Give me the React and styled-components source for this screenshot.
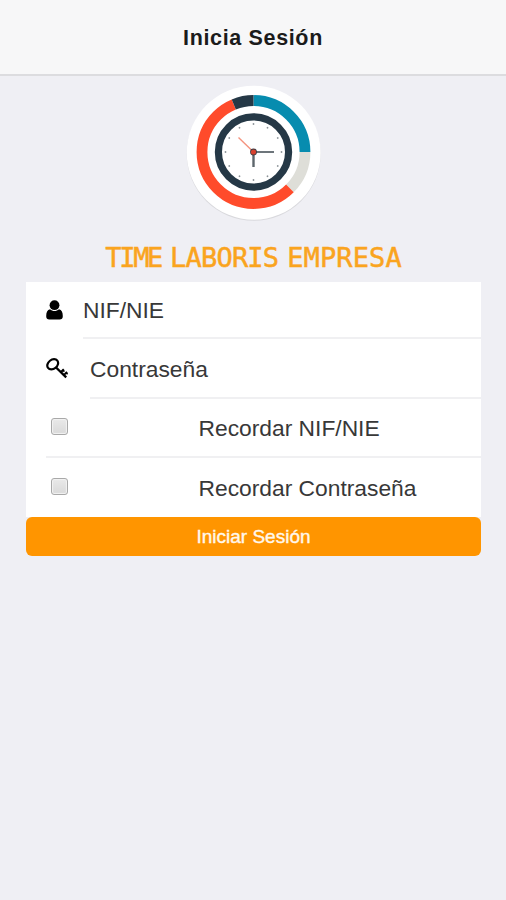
import { useState } from "react";
import styled, { createGlobalStyle } from "styled-components";

const GlobalStyle = createGlobalStyle`
  * {
    box-sizing: border-box;
  }

  body {
    margin: 0;
    background: #efeff4;
    font-family: "Liberation Sans", Arial, sans-serif;
  }
`;

const Page = styled.div`
  min-height: 100vh;
  display: flex;
  flex-direction: column;
`;

const Header = styled.header`
  height: 76px;
  display: flex;
  justify-content: center;
  align-items: center;
  padding-top: 2px;
  background: #f7f7f8;
  border-bottom: 2px solid #dcdcdf;
`;

const HeaderTitle = styled.h1`
  margin: 0;
  color: #1b1b1b;
  font-size: 21.5px;
  font-weight: 700;
  letter-spacing: 0.65px;
`;

const Content = styled.main`
  display: flex;
  flex-direction: column;
  padding: 8px 25px 0 26px;
`;

const Logo = styled.svg`
  width: 140px;
  height: 140px;
  align-self: center;
`;

const Brand = styled.h2`
  height: 34px;
  margin: 17px 0 7px;
  display: flex;
  justify-content: center;
  gap: 9px;
  color: #faa41e;
  font-family: "DejaVu Sans Mono", "Liberation Mono", monospace;
  font-size: 27px;
  font-weight: 400;
  line-height: 34px;
  -webkit-text-stroke: 0.5px #faa41e;
`;

const BrandWord = styled.span`
  letter-spacing: ${(props) => props.$spacing}px;
`;

const Form = styled.form`
  display: flex;
  flex-direction: column;
`;

const List = styled.div`
  padding-left: 20px;
  background: #fff;
`;

const Row = styled.label`
  height: ${(props) => props.$height}px;
  display: flex;
`;

const IconCell = styled.span`
  width: ${(props) => props.$width}px;
  flex-shrink: 0;
  display: flex;
  align-items: center;
  padding-bottom: 1px;
`;

const FieldInput = styled.input`
  flex: 1;
  min-width: 0;
  padding: 2px 0 0;
  border: 0;
  border-bottom: 2px solid #f0f0f2;
  border-radius: 0;
  outline: 0;
  background: transparent;
  color: #383838;
  font-family: inherit;
  font-size: 22.8px;

  &::placeholder {
    color: #383838;
    opacity: 1;
  }
`;

const CheckRow = styled(Row)`
  align-items: center;
  padding-left: 5px;
  border-bottom: ${(props) => (props.$last ? "0" : "2px solid #f0f0f2")};
`;

const Checkbox = styled.input`
  appearance: none;
  width: 17px;
  height: 17px;
  margin: 0 130.5px 2px 0;
  border: 1px solid #a9a9a9;
  border-radius: 3px;
  background: linear-gradient(#e9e9e9, #d9d9d9);
  box-shadow: inset 0 0 1px 1px #f2f2f2;

  &:checked {
    background: #ff9500;
  }
`;

const CheckLabel = styled.span`
  padding-top: 2px;
  color: #383838;
  font-size: 22.8px;
`;

const SubmitButton = styled.button`
  height: 39px;
  padding: 1px 0 0;
  border: 0;
  border-radius: 6px;
  background: #ff9500;
  color: #fff8ec;
  font-family: inherit;
  font-size: 19px;
  -webkit-text-stroke: 0.4px #fff8ec;
`;

// start and length in degrees, clockwise from twelve o'clock
const arcs = [
  { color: "#078caf", start: 0, length: 90 },
  { color: "#deded8", start: 90, length: 45 },
  { color: "#ff4b2b", start: 135, length: 202.5 },
  { color: "#253846", start: 337.5, length: 22.5 },
];

const ClockLogo = () => (
  <Logo viewBox="0 0 140 140">
    <circle cx="69.7" cy="69.8" r="67" fill="#d9d9dd" />
    <circle cx="69.7" cy="68.7" r="67" fill="#fff" />
    {arcs.map((arc) => (
      <circle
        key={arc.color}
        cx="69.5"
        cy="68"
        r="51.5"
        fill="none"
        stroke={arc.color}
        strokeWidth="10.8"
        pathLength="360"
        strokeDasharray={`${arc.length} ${360 - arc.length}`}
        transform={`rotate(${arc.start - 90} 69.5 68)`}
      />
    ))}
    <circle cx="69.5" cy="68" r="35.1" fill="#fff" stroke="#253846" strokeWidth="7.2" />
    {Array.from({ length: 12 }, (_, idx) => (
      <circle key={idx} cx="69.5" cy="40" r="0.9" fill="#8b9297" transform={`rotate(${idx * 30} 69.5 68)`} />
    ))}
    <path d="M69.5 68V83" stroke="#5d666c" strokeWidth="2.4" />
    <path d="M69.5 68H90" stroke="#5d666c" strokeWidth="1.8" />
    <path d="M69.5 68L54.5 53.5" stroke="#f4937e" strokeWidth="1.4" />
    <circle cx="69.5" cy="68" r="3.4" fill="#3b3a40" />
    <circle cx="69.5" cy="68" r="2.6" fill="#d8412f" />
  </Logo>
);

const UserIcon = () => (
  <svg width="17" height="20" viewBox="0 0 17 20">
    <circle cx="8.5" cy="5.2" r="4.9" />
    <path d="M4 9.3C1.3 9.8.2 12.4.2 16.3.2 18.5 1.4 19.6 3.3 19.6H13.7C15.6 19.6 16.8 18.5 16.8 16.3 16.8 12.4 15.7 9.8 13 9.3 10.5 11.7 6.5 11.7 4 9.3Z" />
  </svg>
);

const KeyIcon = () => (
  <svg width="23" height="21" viewBox="0 0 23 21" fill="none" stroke="#000">
    <ellipse cx="6.7" cy="6.3" rx="5.9" ry="4.5" strokeWidth="2.2" transform="rotate(-38 6.7 6.3)" />
    <path d="M9.8 9.2L20.2 19.4" strokeWidth="2.3" />
    <path d="M14.8 14.2L17.8 11.2M17.8 17.1L21 13.9" strokeWidth="2" />
    <path d="M16.8 12L18.4 13.6M20 14.6L21.6 16.2" strokeWidth="1.6" />
  </svg>
);

const App = () => {
  const [user, setUser] = useState("");
  const [password, setPassword] = useState("");

  return (
    <Page>
      <GlobalStyle />
      <Header>
        <HeaderTitle>Inicia Sesión</HeaderTitle>
      </Header>
      <Content>
        <ClockLogo />
        <Brand>
          <BrandWord $spacing={-2.3}>TIME</BrandWord>
          <BrandWord $spacing={-0.8}>LABORIS</BrandWord>
          <BrandWord $spacing={0.1}>EMPRESA</BrandWord>
        </Brand>
        <Form onSubmit={(e) => e.preventDefault()}>
          <List>
            <Row $height={57}>
              <IconCell $width={37}>
                <UserIcon />
              </IconCell>
              <FieldInput placeholder="NIF/NIE" value={user} onChange={(e) => setUser(e.target.value)} />
            </Row>
            <Row $height={60}>
              <IconCell $width={44}>
                <KeyIcon />
              </IconCell>
              <FieldInput
                type="password"
                placeholder="Contraseña"
                value={password}
                onChange={(e) => setPassword(e.target.value)}
              />
            </Row>
            <CheckRow $height={59}>
              <Checkbox type="checkbox" />
              <CheckLabel>Recordar NIF/NIE</CheckLabel>
            </CheckRow>
            <CheckRow $height={59} $last>
              <Checkbox type="checkbox" />
              <CheckLabel>Recordar Contraseña</CheckLabel>
            </CheckRow>
          </List>
          <SubmitButton type="submit">Iniciar Sesión</SubmitButton>
        </Form>
      </Content>
    </Page>
  );
};

export default App;
